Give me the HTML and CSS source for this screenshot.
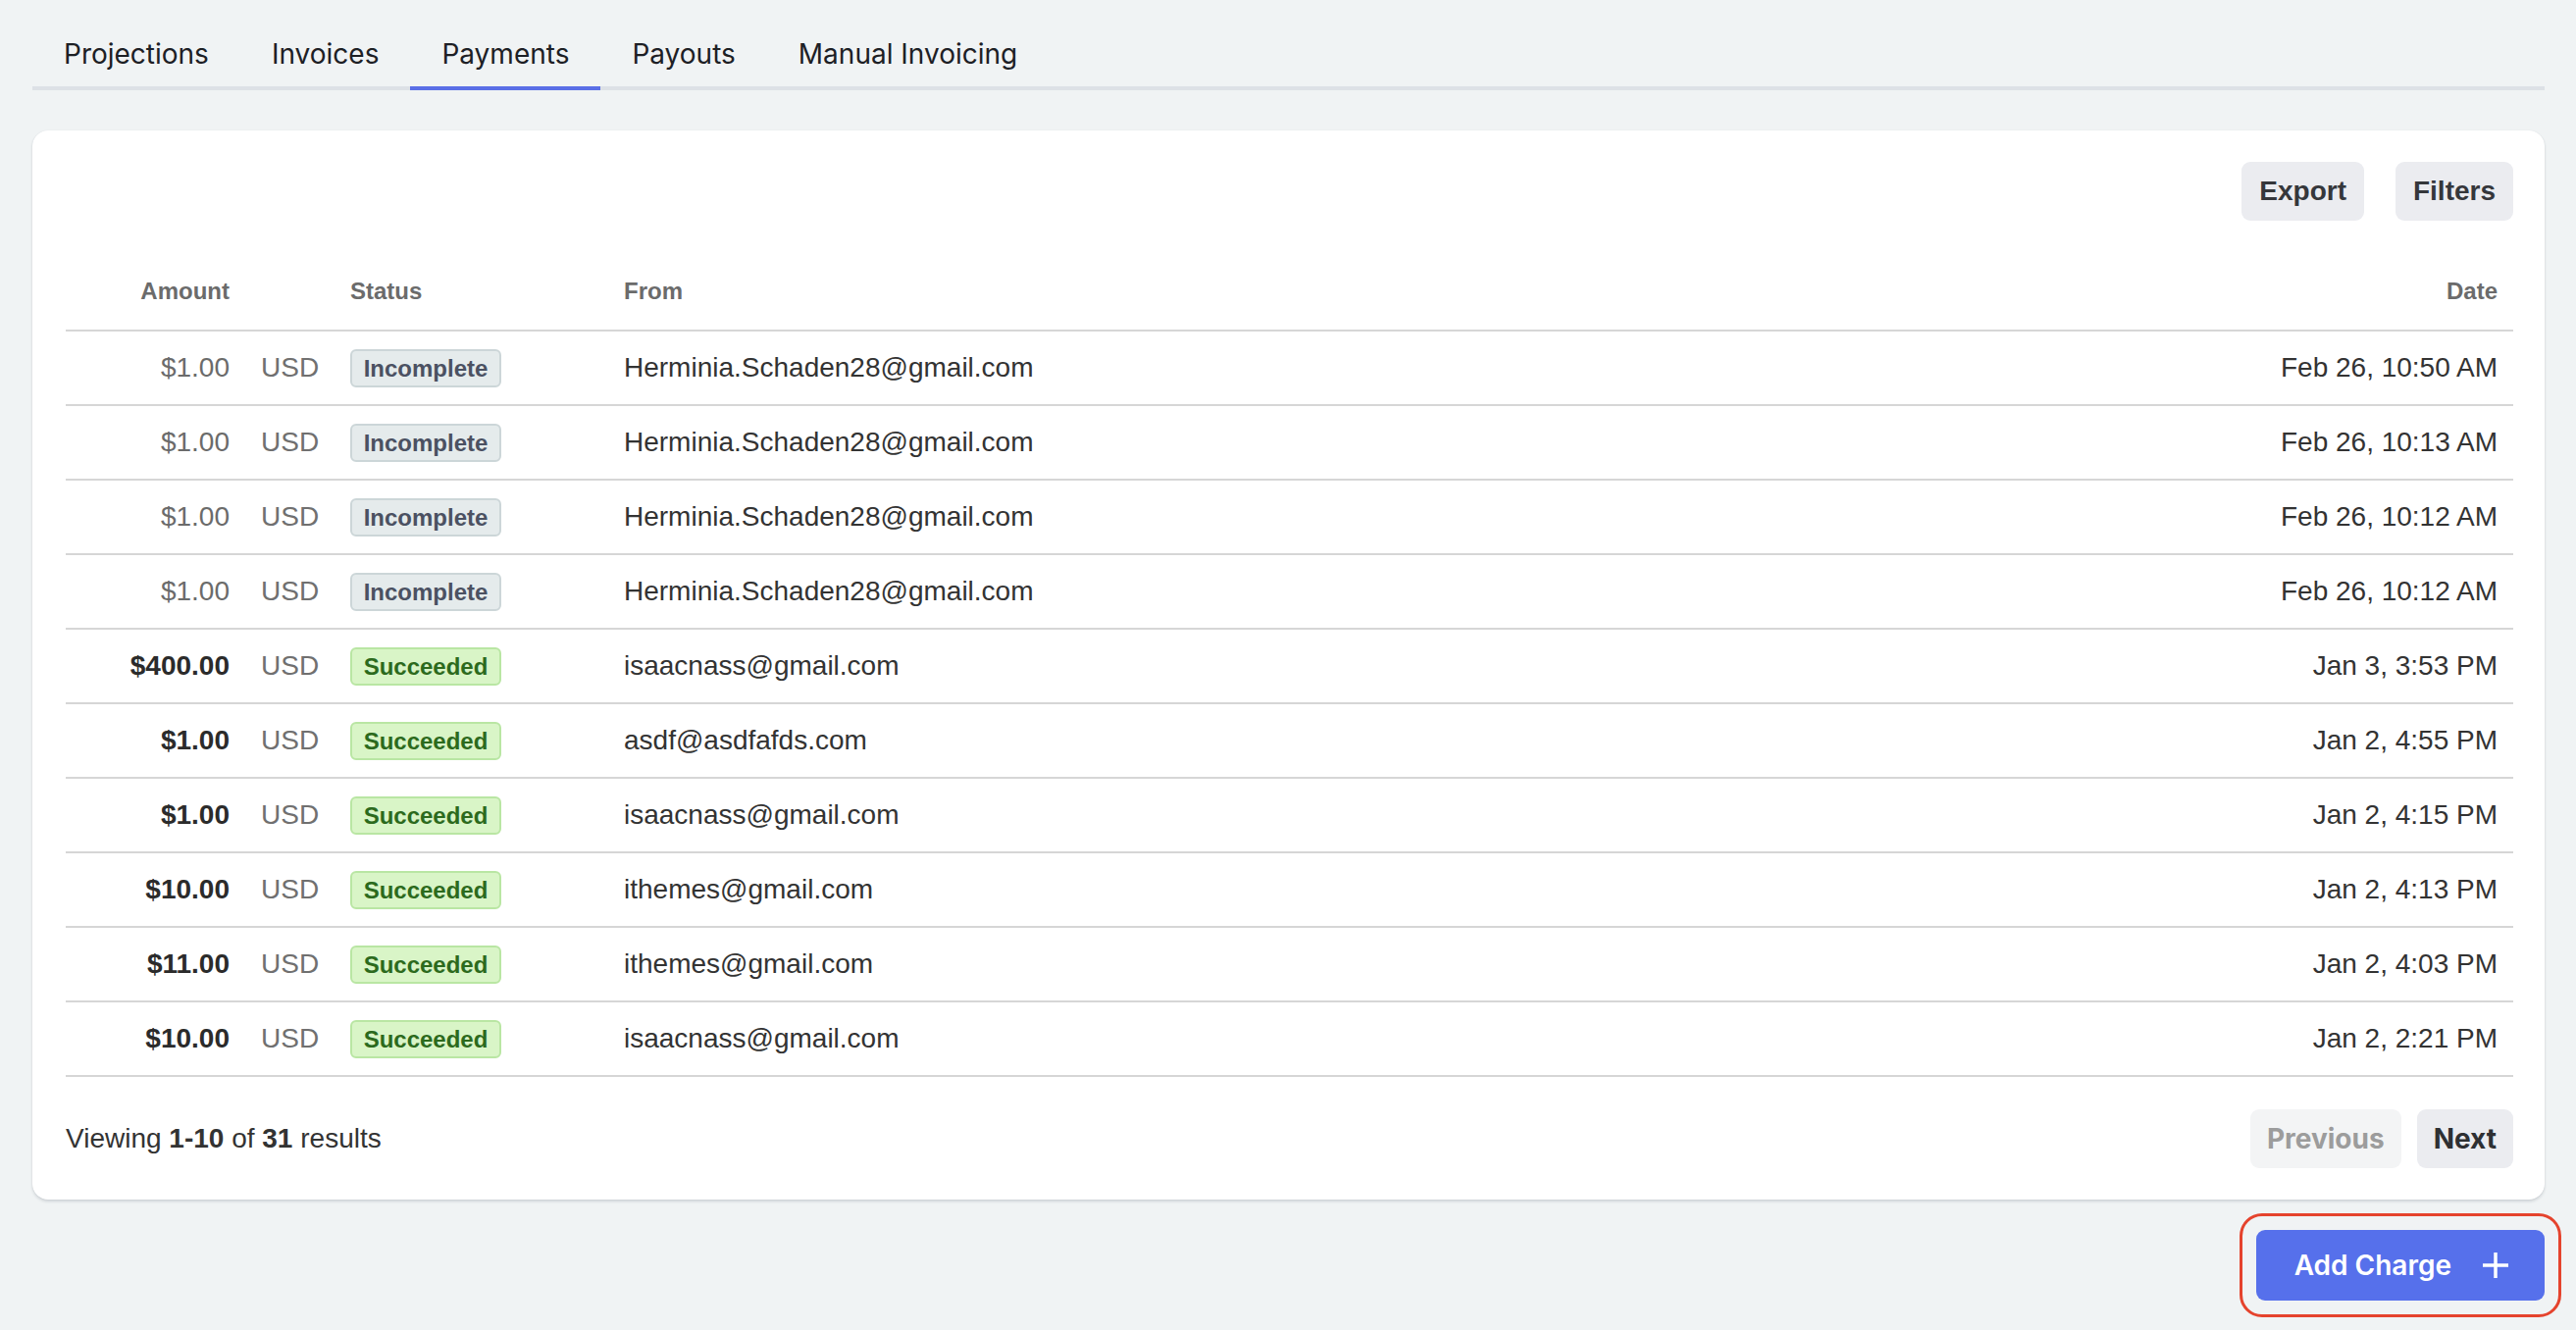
FILE: index.html
```html
<!DOCTYPE html>
<html>
<head>
<meta charset="utf-8">
<link rel="stylesheet" href="styles.css">
</head>
<body>
<nav class="tabs">
  <a class="tab">Projections</a>
  <a class="tab">Invoices</a>
  <a class="tab active">Payments</a>
  <a class="tab">Payouts</a>
  <a class="tab">Manual Invoicing</a>
</nav>

<section class="card">
  <div class="toolbar">
    <button class="btn-gray">Export</button>
    <button class="btn-gray">Filters</button>
  </div>
  <table class="payments">
    <thead>
      <tr>
        <th class="c-amount">Amount</th>
        <th class="c-cur"></th>
        <th class="c-status">Status</th>
        <th class="c-from">From</th>
        <th class="c-date">Date</th>
      </tr>
    </thead>
    <tbody>
      <tr><td class="c-amount">$1.00</td><td class="c-cur">USD</td><td class="c-status"><span class="badge incomplete">Incomplete</span></td><td class="c-from">Herminia.Schaden28@gmail.com</td><td class="c-date">Feb 26, 10:50 AM</td></tr>
      <tr><td class="c-amount">$1.00</td><td class="c-cur">USD</td><td class="c-status"><span class="badge incomplete">Incomplete</span></td><td class="c-from">Herminia.Schaden28@gmail.com</td><td class="c-date">Feb 26, 10:13 AM</td></tr>
      <tr><td class="c-amount">$1.00</td><td class="c-cur">USD</td><td class="c-status"><span class="badge incomplete">Incomplete</span></td><td class="c-from">Herminia.Schaden28@gmail.com</td><td class="c-date">Feb 26, 10:12 AM</td></tr>
      <tr><td class="c-amount">$1.00</td><td class="c-cur">USD</td><td class="c-status"><span class="badge incomplete">Incomplete</span></td><td class="c-from">Herminia.Schaden28@gmail.com</td><td class="c-date">Feb 26, 10:12 AM</td></tr>
      <tr><td class="c-amount strong">$400.00</td><td class="c-cur">USD</td><td class="c-status"><span class="badge succeeded">Succeeded</span></td><td class="c-from">isaacnass@gmail.com</td><td class="c-date">Jan 3, 3:53 PM</td></tr>
      <tr><td class="c-amount strong">$1.00</td><td class="c-cur">USD</td><td class="c-status"><span class="badge succeeded">Succeeded</span></td><td class="c-from">asdf@asdfafds.com</td><td class="c-date">Jan 2, 4:55 PM</td></tr>
      <tr><td class="c-amount strong">$1.00</td><td class="c-cur">USD</td><td class="c-status"><span class="badge succeeded">Succeeded</span></td><td class="c-from">isaacnass@gmail.com</td><td class="c-date">Jan 2, 4:15 PM</td></tr>
      <tr><td class="c-amount strong">$10.00</td><td class="c-cur">USD</td><td class="c-status"><span class="badge succeeded">Succeeded</span></td><td class="c-from">ithemes@gmail.com</td><td class="c-date">Jan 2, 4:13 PM</td></tr>
      <tr><td class="c-amount strong">$11.00</td><td class="c-cur">USD</td><td class="c-status"><span class="badge succeeded">Succeeded</span></td><td class="c-from">ithemes@gmail.com</td><td class="c-date">Jan 2, 4:03 PM</td></tr>
      <tr><td class="c-amount strong">$10.00</td><td class="c-cur">USD</td><td class="c-status"><span class="badge succeeded">Succeeded</span></td><td class="c-from">isaacnass@gmail.com</td><td class="c-date">Jan 2, 2:21 PM</td></tr>
    </tbody>
  </table>
  <div class="pager">
    <p class="viewing">Viewing <b>1-10</b> of <b>31</b> results</p>
    <div class="pager-btns">
      <button class="btn-page disabled">Previous</button>
      <button class="btn-page">Next</button>
    </div>
  </div>
</section>

<div class="actions">
  <div class="ring">
    <button class="btn-primary">Add Charge
      <svg class="plus" width="28" height="28" viewBox="0 0 28 28"><path d="M14 1v26M1 14h26" stroke="#fff" stroke-width="3.5" fill="none"/></svg>
    </button>
  </div>
</div>
</body>
</html>
```

FILE: styles.css
```css
* { box-sizing: border-box; }

html, body {
  margin: 0;
  background: #f0f3f4;
}

body {
  padding: 22px 32px 0 33px;
  font-family: "Liberation Sans", Arial, sans-serif;
  color: #333;
}

.tabs {
  display: flex;
  border-bottom: 4px solid #dde1e6;
}

.tab {
  font-family: Inter, "Noto Sans", sans-serif;
  font-size: 28px;
  line-height: 42px;
  color: #1d2025;
  padding: 12px 32px 12px;
  margin-bottom: -4px;
  border-bottom: 4px solid transparent;
}

.tab.active {
  border-bottom-color: #5a6fe6;
}

.card {
  margin-top: 41px;
  background: #fff;
  border-radius: 16px;
  box-shadow: 0 2px 3px rgba(40, 50, 70, 0.16), 0 0 1px rgba(40, 50, 70, 0.12);
  padding: 32px 32px 32px 34px;
}

.toolbar {
  display: flex;
  justify-content: flex-end;
  gap: 32px;
}

.btn-gray {
  font-family: "Liberation Sans", Arial, sans-serif;
  font-weight: 700;
  font-size: 28px;
  height: 60px;
  padding: 0 18px;
  border: 0;
  border-radius: 9px;
  background: #ebecf0;
  color: #35373b;
}

.payments {
  width: 100%;
  border-collapse: collapse;
}

.payments th {
  font-size: 24px;
  font-weight: 700;
  color: #6b6b6b;
  line-height: 33px;
  padding: 55px 0 23px;
  border-bottom: 2px solid #d6d6d6;
  text-align: left;
}

.payments td {
  font-size: 28px;
  line-height: 34px;
  height: 76px;
  padding: 0;
  border-bottom: 2px solid #d6d6d6;
  color: #333;
  vertical-align: middle;
}

.payments .c-amount {
  width: 183px;
  text-align: right;
  padding-right: 16px;
}

.payments td.c-amount { color: #6b6b6b; }
.payments td.c-amount.strong { color: #2b2b2b; font-weight: 700; }

.payments .c-cur {
  width: 107px;
  padding-left: 16px;
}

.payments td.c-cur { color: #707070; }

.payments .c-status { width: 279px; }

.payments .c-date {
  text-align: right;
  padding-right: 16px;
}

.badge {
  display: inline-block;
  width: 154px;
  height: 39px;
  line-height: 35px;
  text-align: center;
  font-size: 24px;
  font-weight: 700;
  border-radius: 6px;
  border: 2px solid;
}

.badge.incomplete {
  background: #e5ebec;
  border-color: #ccd6d8;
  color: #4b5162;
}

.badge.succeeded {
  background: #d9f5c7;
  border-color: #b9e6a3;
  color: #2c6a1d;
}

.pager {
  margin-top: 33px;
  display: flex;
  align-items: center;
  justify-content: space-between;
}

.viewing {
  margin: 0;
  font-size: 28px;
  color: #333;
}

.viewing b { font-weight: 700; }

.pager-btns {
  display: flex;
  gap: 16px;
}

.btn-page {
  font-family: Inter, "Noto Sans", sans-serif;
  font-weight: 700;
  font-size: 28px;
  height: 60px;
  padding: 0 17px;
  border: 0;
  border-radius: 9px;
  background: #ebecf0;
  color: #2e3033;
}

.btn-page.disabled {
  background: #f3f4f5;
  color: #9c9c9c;
}

.actions {
  display: flex;
  justify-content: flex-end;
  margin-top: 14px;
  margin-right: -17px;
  padding-bottom: 15px;
}

.ring {
  border: 3px solid #e5432d;
  border-radius: 23px;
  padding: 14px;
}

.btn-primary {
  display: flex;
  align-items: center;
  gap: 31px;
  height: 72px;
  padding: 0 36px 0 39px;
  border: 0;
  border-radius: 9px;
  background: #5670eb;
  color: #fff;
  font-family: Inter, "Noto Sans", sans-serif;
  font-weight: 600;
  font-size: 28px;
}

.plus { display: block; }
```
